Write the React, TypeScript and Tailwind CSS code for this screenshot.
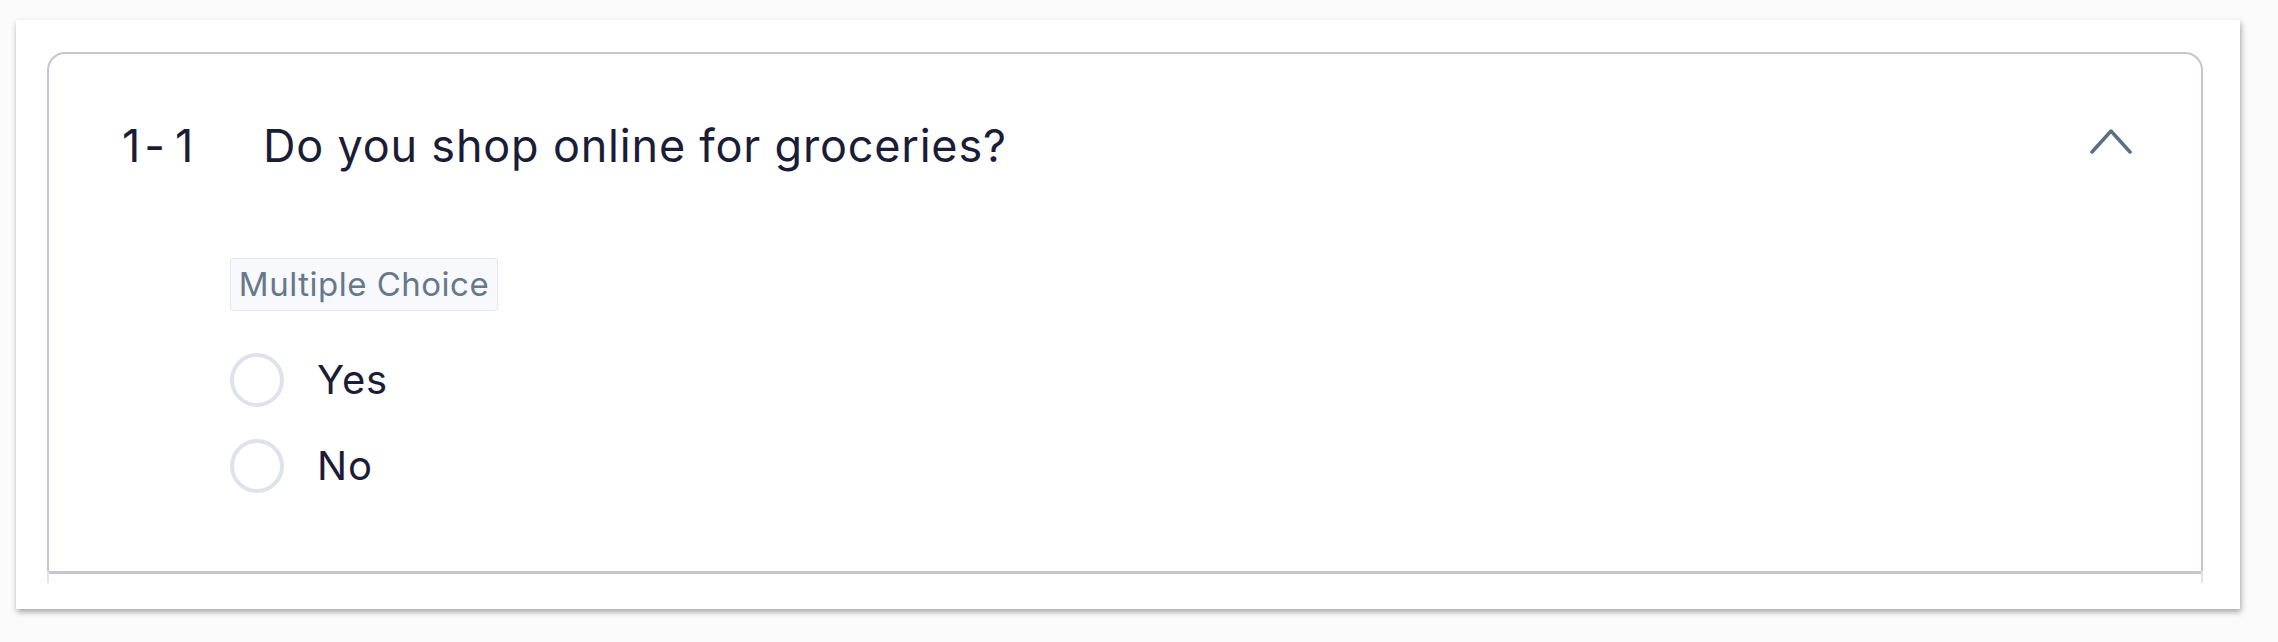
import React from "react";

export default function App() {
  return (
    <div
      className="w-[2278px] h-[642px] bg-[#fbfbfb] pt-[20px] pl-[16px]"
      style={{ fontFamily: "Inter, 'Noto Sans', sans-serif" }}
    >
      <div className="w-[2224px] h-[589px] bg-white shadow-[1px_3px_6px_rgba(0,0,0,0.35)] pt-[32px] pl-[31px]">
        <div className="w-[2156px] h-[531px] overflow-hidden flex flex-col">
          <div className="h-[519px] shrink-0 border-x-2 border-t-2 border-[#c6c6d3] rounded-t-[18px]">
            <div className="flex items-start pt-[69px] pl-[73px] pr-[69px]">
              <span className="w-[141px] shrink-0 text-[45px] leading-none text-[#1b1d36] flex">
                <span>1</span>
                <span className="ml-[4px]">-</span>
                <span className="ml-[10px]">1</span>
              </span>
              <span className="flex-1 text-[45px] leading-none tracking-[0.8px] text-[#1b1d36]">
                Do you shop online for groceries?
              </span>
              <svg
                width="42"
                height="25"
                viewBox="0 0 42 25"
                className="mt-[6px] shrink-0"
                fill="none"
              >
                <polyline
                  points="2,23 21,2 40,23"
                  stroke="#5d6f80"
                  strokeWidth="3.5"
                  strokeLinecap="round"
                  strokeLinejoin="round"
                />
              </svg>
            </div>
            <div className="pl-[181px] mt-[90px] flex flex-col">
              <div className="w-[268px] h-[53px] flex items-center justify-center bg-[#f7f9fc] border-[1.5px] border-[#e4e7ee] rounded-[3px]">
                <span className="text-[33px] leading-none tracking-[0.5px] text-[#66788a]">
                  Multiple Choice
                </span>
              </div>
              <div className="mt-[42px] flex flex-col gap-[32px]">
                {["Yes", "No"].map((opt) => (
                  <div key={opt} className="h-[54px] flex items-center">
                    <div className="w-[54px] h-[54px] shrink-0 rounded-full border-[4px] border-[#dfe2ea]" />
                    <span className="ml-[33px] text-[40px] leading-none tracking-[0.8px] text-[#1b1d36]">
                      {opt}
                    </span>
                  </div>
                ))}
              </div>
            </div>
          </div>
          <div className="h-[12px] shrink-0 border-x-2 border-[#e1e2ea]">
            <div className="h-[3px] bg-[#c6c6d3]" />
          </div>
        </div>
      </div>
    </div>
  );
}
